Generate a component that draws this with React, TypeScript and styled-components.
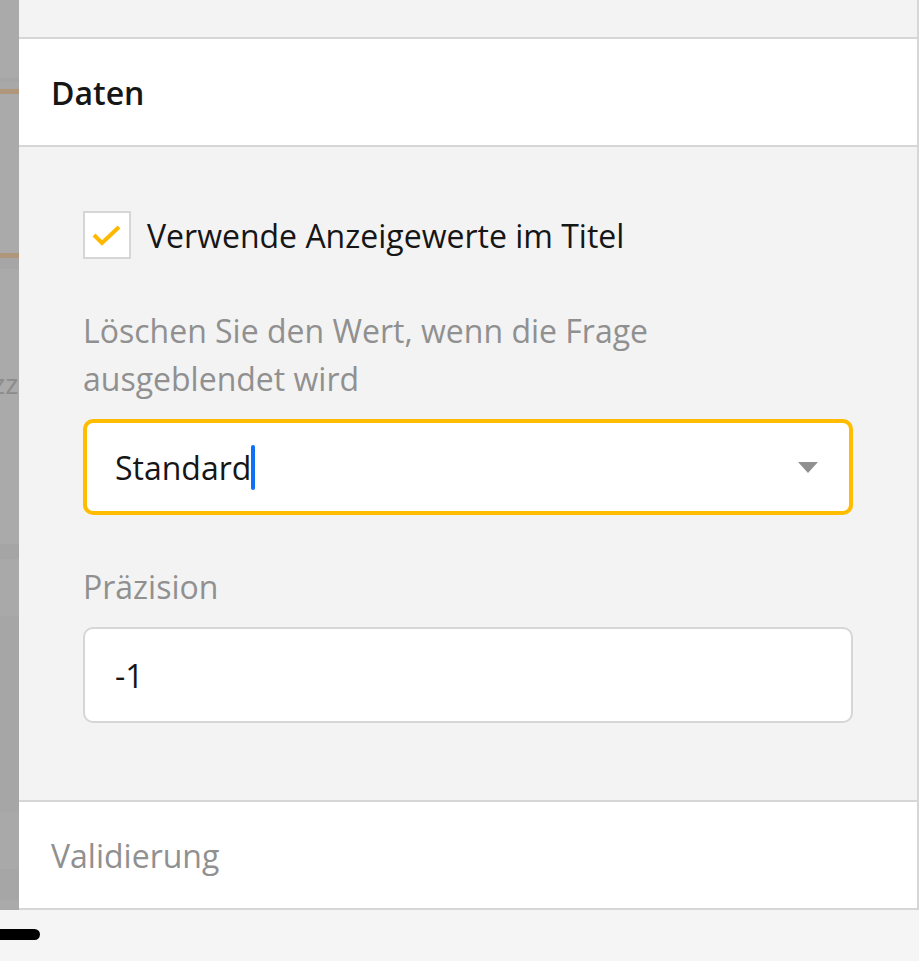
import React from "react";
import styled, { createGlobalStyle } from "styled-components";

const Global = createGlobalStyle`
  html, body { margin: 0; padding: 0; background: #f5f5f5; }
  body { font-family: "Open Sans", "Noto Sans", sans-serif; -webkit-font-smoothing: antialiased; }
  * { box-sizing: border-box; }
`;

const Screen = styled.div`
  width: 919px;
  height: 961px;
  display: flex;
  flex-direction: column;
  overflow: hidden;
  background: #f5f5f5;
`;

const Main = styled.div`
  display: flex;
  height: 910px;
`;

const Backdrop = styled.div`
  width: 19px;
  flex: none;
  display: flex;
  flex-direction: column;
  overflow: hidden;
  background: #aaaaaa;
`;

const Band = styled.div<{ $h: number; $c: string }>`
  height: ${(p) => p.$h}px;
  flex: none;
  background: ${(p) => p.$c};
`;

const GhostText = styled.div`
  height: 48px;
  flex: none;
  margin-left: -8px;
  font-size: 28px;
  line-height: 48px;
  color: #8c8c8c;
  white-space: nowrap;
`;

const Panel = styled.div`
  flex: 1;
  display: flex;
  flex-direction: column;
  background: #f3f3f3;
  border-right: 2px solid #d6d6d6;
`;

const TopGap = styled.div`
  height: 39px;
  flex: none;
  border-bottom: 2px solid #d6d6d6;
`;

const SectionHeader = styled.div<{ $muted?: boolean }>`
  height: 108px;
  flex: none;
  display: flex;
  align-items: center;
  padding-left: 32px;
  background: #ffffff;
  border-bottom: 2px solid #d6d6d6;
  font-size: 32px;
  font-weight: ${(p) => (p.$muted ? 400 : 600)};
  color: ${(p) => (p.$muted ? "#909090" : "#161616")};
`;

const Content = styled.div`
  height: 655px;
  flex: none;
  padding: 64px 64px 0 64px;
  display: flex;
  flex-direction: column;
  border-bottom: 2px solid #d6d6d6;
`;

const CheckRow = styled.label`
  display: flex;
  align-items: center;
  gap: 16px;
  height: 48px;
  font-size: 32px;
  color: #161616;
`;

const CheckBox = styled.span`
  width: 48px;
  height: 48px;
  flex: none;
  background: #ffffff;
  border: 2px solid #d6d6d6;
  display: flex;
  align-items: center;
  justify-content: center;
`;

const FieldLabel = styled.div<{ $top: number }>`
  margin-top: ${(p) => p.$top}px;
  font-size: 32px;
  line-height: 48px;
  color: #909090;
`;

const Field = styled.div<{ $focused?: boolean }>`
  margin-top: 16px;
  height: 96px;
  flex: none;
  display: flex;
  align-items: center;
  padding: 0 ${(p) => (p.$focused ? 30 : 32)}px 0 ${(p) => (p.$focused ? 28 : 30)}px;
  background: #ffffff;
  border: ${(p) => (p.$focused ? "4px solid #ffbc00" : "2px solid #d6d6d6")};
  border-radius: 10px;
  font-size: 32px;
  color: #161616;
`;

const Value = styled.span`
  flex: 1;
  display: flex;
  align-items: center;
`;

const Caret = styled.span`
  display: inline-block;
  width: 4px;
  height: 45px;
  margin-left: 0;
  border-radius: 2px;
  background: #0f6ff5;
`;

const Arrow = styled.svg`
  flex: none;
  margin-right: 1px;
`;

const BottomBar = styled.div`
  height: 51px;
  display: flex;
  align-items: center;
  background: #f5f5f5;
`;

const HomeBar = styled.div`
  width: 40px;
  height: 11px;
  margin-top: -2px;
  background: #000000;
  border-radius: 0 6px 6px 0;
`;

export default function App() {
  return (
    <Screen>
      <Global />
      <Main>
        <Backdrop>
          <Band $h={78} $c="#aaaaaa" />
          <Band $h={4} $c="#a5a5a5" />
          <Band $h={7} $c="#a8a8a8" />
          <Band $h={5} $c="#b0967a" />
          <Band $h={159} $c="#aaaaaa" />
          <Band $h={5} $c="#b0967a" />
          <Band $h={11} $c="#a6a6a6" />
          <Band $h={90} $c="#aaaaaa" />
          <GhostText>zz</GhostText>
          <Band $h={137} $c="#aaaaaa" />
          <Band $h={15} $c="#a5a5a5" />
          <Band $h={57} $c="#a9a9a9" />
          <Band $h={196} $c="#a6a6a6" />
          <Band $h={57} $c="#a9a9a9" />
          <Band $h={31} $c="#a6a6a6" />
        </Backdrop>
        <Panel>
          <TopGap />
          <SectionHeader>Daten</SectionHeader>
          <Content>
            <CheckRow>
              <CheckBox>
                <svg width="30" height="22" viewBox="0 0 30 22">
                  <path d="M2 11 L10 19 L27 3" fill="none" stroke="#ffb800" strokeWidth="4" />
                </svg>
              </CheckBox>
              Verwende Anzeigewerte im Titel
            </CheckRow>
            <FieldLabel $top={48}>
              Löschen Sie den Wert, wenn die Frage
              <br />
              ausgeblendet wird
            </FieldLabel>
            <Field $focused>
              <Value>
                Standard
                <Caret />
              </Value>
              <Arrow width="20" height="11" viewBox="0 0 20 11">
                <path d="M0 0 H20 L10 11 Z" fill="#909090" />
              </Arrow>
            </Field>
            <FieldLabel $top={48}>Präzision</FieldLabel>
            <Field>
              <Value>-1</Value>
            </Field>
          </Content>
          <SectionHeader $muted>Validierung</SectionHeader>
        </Panel>
      </Main>
      <BottomBar>
        <HomeBar />
      </BottomBar>
    </Screen>
  );
}
